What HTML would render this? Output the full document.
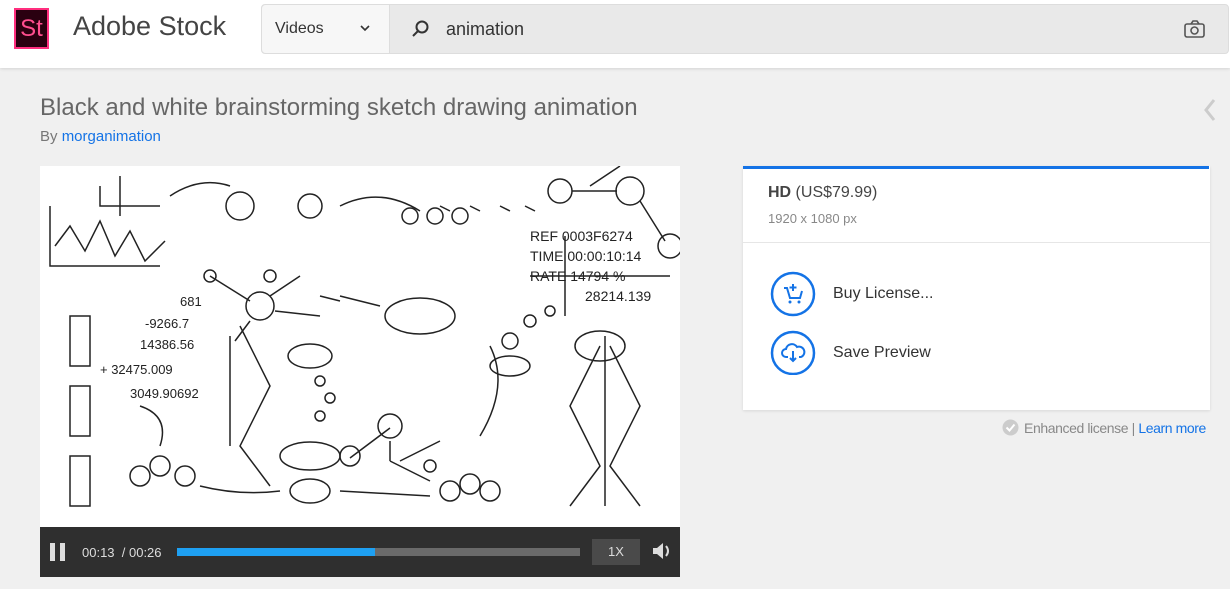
<!DOCTYPE html>
<html><head><style>
body{margin:0;width:1230px;height:589px;background:#f0f0f0;font-family:"Liberation Sans",sans-serif;position:relative;overflow:hidden}
.a{position:absolute}
</style></head><body>
<div class="a" style="left:0;top:0;width:1230px;height:68px;background:#fff;box-shadow:0 1px 3px rgba(0,0,0,.12)"></div>
<div class="a" style="left:14px;top:8px;width:31px;height:37px;background:#2a0010;border:2px solid #ff2e7e;color:#ff4e8e;font-size:24px;line-height:37px;text-align:center">St</div>
<div class="a" style="left:73px;top:11px;font-size:27px;color:#444;font-weight:300">Adobe Stock</div>
<div class="a" style="left:261px;top:4px;width:966px;height:48px;background:#e9e9e9;border:1px solid #ddd;border-radius:4px"></div>
<div class="a" style="left:262px;top:5px;width:127px;height:48px;background:#f7f7f7;border-right:1px solid #ddd;border-radius:4px 0 0 4px"></div>
<div class="a" style="left:275px;top:20px;font-size:16px;color:#333">Videos</div>
<svg class="a" style="left:360px;top:24px" width="10" height="8"><path d="M1 2l4 4 4-4" stroke="#333" stroke-width="1.6" fill="none"/></svg>
<svg class="a" style="left:411px;top:19px" width="20" height="20"><circle cx="11" cy="8" r="5.5" stroke="#333" stroke-width="2" fill="none"/><path d="M7 12l-5 5" stroke="#333" stroke-width="2"/></svg>
<div class="a" style="left:446px;top:19px;font-size:18px;color:#333">animation</div>
<svg class="a" style="left:1184px;top:20px" width="22" height="18"><rect x="1" y="4" width="19" height="13" rx="2" stroke="#555" stroke-width="1.6" fill="none"/><path d="M7 4l2-3h4l2 3" stroke="#555" stroke-width="1.6" fill="none"/><circle cx="10.5" cy="10.5" r="3.5" stroke="#555" stroke-width="1.6" fill="none"/></svg>
<div class="a" style="left:40px;top:94px;font-size:24px;color:#666">Black and white brainstorming sketch drawing animation</div>
<div class="a" style="left:40px;top:128px;font-size:15px;color:#777">By <span style="color:#1473e6">morganimation</span></div>
<svg class="a" style="left:1203px;top:98px" width="14" height="24"><path d="M11 2L3 12l8 10" stroke="#ccc" stroke-width="3" fill="none"/></svg>
<div class="a" style="left:40px;top:166px;width:640px;height:361px;background:#fff"></div>
<svg class="a" style="left:40px;top:166px" width="640" height="361" fill="none" stroke="#222" stroke-width="1.5">
<path d="M10 40v60h110M15 80l15-20 15 25 15-30 15 35 15-25 15 30 20-20"/><path d="M60 20v20h60M80 10v40"/>
<circle cx="200" cy="40" r="14"/><circle cx="270" cy="40" r="12"/><path d="M130 30q30-20 60-10M300 40q40-20 80 5M400 40l10 5M430 40l10 5M460 40l10 5M485 40l10 5"/>
<circle cx="370" cy="50" r="8"/><circle cx="395" cy="50" r="8"/><circle cx="420" cy="50" r="8"/>
<circle cx="520" cy="25" r="12"/><circle cx="590" cy="25" r="14"/><circle cx="630" cy="80" r="12"/><path d="M532 25h45M600 35l25 40M550 20l30-20"/>
<path d="M525 70v80M490 110h140"/><text x="490" y="75" font-size="14" fill="#222" stroke="none">REF  0003F6274</text><text x="490" y="95" font-size="14" fill="#222" stroke="none">TIME 00:00:10:14</text><text x="490" y="115" font-size="14" fill="#222" stroke="none">RATE 14794 %</text><text x="545" y="135" font-size="14" fill="#222" stroke="none">28214.139</text>
<circle cx="220" cy="140" r="14"/><path d="M170 110l40 25M230 130l30-20M210 155l-15 20M235 145l45 5"/><circle cx="170" cy="110" r="6"/><circle cx="230" cy="110" r="6"/>
<text x="140" y="140" font-size="13" fill="#222" stroke="none">681</text><text x="105" y="162" font-size="13" fill="#222" stroke="none">-9266.7</text><text x="100" y="183" font-size="13" fill="#222" stroke="none">14386.56</text><text x="60" y="208" font-size="13" fill="#222" stroke="none">+ 32475.009</text><text x="90" y="232" font-size="13" fill="#222" stroke="none">3049.90692</text>
<path d="M30 150h20v50h-20zM30 220h20v50h-20zM30 290h20v50h-20z"/><ellipse cx="380" cy="150" rx="35" ry="18"/><path d="M280 130l20 5M300 130l20 5M320 135l20 5"/>
<ellipse cx="270" cy="190" rx="22" ry="12"/><circle cx="280" cy="215" r="5"/><circle cx="290" cy="232" r="5"/><circle cx="280" cy="250" r="5"/>
<circle cx="350" cy="260" r="12"/><path d="M350 275v20M350 262l-40 30M350 295l40 20M360 295l40-20"/><circle cx="310" cy="290" r="10"/><circle cx="390" cy="300" r="6"/>
<path d="M200 160l30 60-30 60 30 40M190 170v110"/><path d="M560 180l-30 60 30 60-30 40M570 180l30 60-30 60 30 40M565 170v170"/><ellipse cx="560" cy="180" rx="25" ry="15"/>
<circle cx="100" cy="310" r="10"/><circle cx="120" cy="300" r="10"/><circle cx="145" cy="310" r="10"/><ellipse cx="270" cy="290" rx="30" ry="14"/><ellipse cx="270" cy="325" rx="20" ry="12"/>
<circle cx="410" cy="325" r="10"/><circle cx="430" cy="318" r="10"/><circle cx="450" cy="325" r="10"/><path d="M160 320q40 10 80 5M300 325l90 5M450 180q20 40-10 90M100 240q30 10 20 40"/>
<circle cx="470" cy="175" r="8"/><circle cx="490" cy="155" r="6"/><circle cx="510" cy="145" r="5"/><ellipse cx="470" cy="200" rx="20" ry="10"/>
</svg>
<div class="a" style="left:40px;top:527px;width:640px;height:50px;background:#2f2f2f"></div>
<div class="a" style="left:50px;top:543px;width:5px;height:18px;background:#ddd"></div>
<div class="a" style="left:60px;top:543px;width:5px;height:18px;background:#ddd"></div>
<div class="a" style="left:82px;top:545px;font-size:13px;color:#ddd">00:13 &nbsp;/ 00:26</div>
<div class="a" style="left:177px;top:548px;width:403px;height:8px;background:#6a6a6a"></div>
<div class="a" style="left:177px;top:548px;width:198px;height:8px;background:#1ea0f2"></div>
<div class="a" style="left:592px;top:539px;width:48px;height:26px;background:#4a4a4a;color:#ddd;font-size:13px;line-height:26px;text-align:center">1X</div>
<svg class="a" style="left:651px;top:541px" width="20" height="20"><path d="M2 7h4l6-5v16l-6-5H2z" fill="#ddd"/><path d="M15 5q4 5 0 10" stroke="#ddd" stroke-width="2" fill="none"/></svg>
<div class="a" style="left:743px;top:166px;width:467px;height:244px;background:#fff;box-shadow:0 1px 3px rgba(0,0,0,.1)"></div>
<div class="a" style="left:743px;top:166px;width:466px;height:3px;background:#1473e6"></div>
<div class="a" style="left:743px;top:242px;width:467px;height:1px;background:#e6e6e6"></div>
<div class="a" style="left:768px;top:184px;font-size:16px;color:#444"><b>HD</b> (US$79.99)</div>
<div class="a" style="left:768px;top:211px;font-size:13px;color:#888">1920 x 1080 px</div>
<svg class="a" style="left:770px;top:271px" width="48" height="104" fill="none" stroke="#1473e6"><circle cx="23" cy="23" r="21" stroke-width="2.5"/><circle cx="23" cy="82" r="21" stroke-width="2.5"/>
<path d="M14 17h3l3 10h10l2-7M23 13v7M19.5 16.5h7" stroke-width="2"/><circle cx="20" cy="31" r="1" fill="#1473e6"/><circle cx="29" cy="31" r="1" fill="#1473e6"/>
<path d="M18 86h-2a4 4 0 0 1 0-8 6 6 0 0 1 11-2 4 4 0 0 1 4 10h-2M23 80v10M20 87l3 3 3-3" stroke-width="2"/></svg>
<div class="a" style="left:833px;top:285px;font-size:16px;color:#333">Buy License...</div>
<div class="a" style="left:833px;top:344px;font-size:16px;color:#333">Save Preview</div>
<svg class="a" style="left:1002px;top:419px" width="17" height="17"><circle cx="8.5" cy="8.5" r="8" fill="#ccc"/><path d="M4.5 8.5l3 3 5-6" stroke="#fff" stroke-width="2" fill="none"/></svg>
<div class="a" style="left:1024px;top:420px;font-size:14px;color:#888;letter-spacing:-0.4px">Enhanced license | <span style="color:#1473e6">Learn more</span></div>
</body></html>
